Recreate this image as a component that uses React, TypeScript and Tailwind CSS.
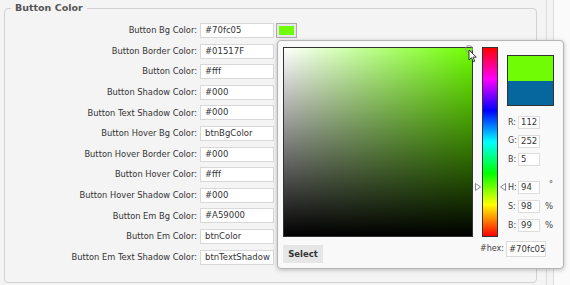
import React from 'react';

const fields: { label: string; value: string }[] = [
    { label: 'Button Bg Color:', value: '#70fc05' },
    { label: 'Button Border Color:', value: '#01517F' },
    { label: 'Button Color:', value: '#fff' },
    { label: 'Button Shadow Color:', value: '#000' },
    { label: 'Button Text Shadow Color:', value: '#000' },
    { label: 'Button Hover Bg Color:', value: 'btnBgColor' },
    { label: 'Button Hover Border Color:', value: '#000' },
    { label: 'Button Hover Color:', value: '#fff' },
    { label: 'Button Hover Shadow Color:', value: '#000' },
    { label: 'Button Em Bg Color:', value: '#A59000' },
    { label: 'Button Em Color:', value: 'btnColor' },
    { label: 'Button Em Text Shadow Color:', value: 'btnTextShadow' },
];

function SmallField({ label, value, unit }: { label: string; value: string; unit?: string }) {
    return (
        <div className="flex items-center h-[13px]">
            <span className="w-[10px] text-[8px] text-[#444]">{label}</span>
            <div className="w-[22px] h-[13px] bg-white border border-[#dcdcdc] px-[2px] text-[8.5px] leading-[11px] text-[#333]">
                {value}
            </div>
            {unit && <span className="ml-[5px] text-[8.5px] text-[#444]">{unit}</span>}
        </div>
    );
}

function Cursor() {
    return (
        <svg width="10" height="14" viewBox="0 0 10 14" className="absolute left-[184px] top-[1px]">
            <path d="M1 1 L1 11 L3.5 8.7 L5.3 12.8 L6.8 12.1 L5 8.2 L8.3 8.2 Z" fill="#fff" stroke="#222" strokeWidth="0.9" strokeLinejoin="round" />
        </svg>
    );
}

function ColorPicker() {
    return (
        <div className="absolute left-[277px] top-[40px] w-[287px] h-[229px] bg-[#f9f9f9] border border-[#b5b5b5] rounded-[4px] shadow-[0_1px_4px_rgba(0,0,0,0.25)] px-[5px] pt-[6px]">
            <div className="flex items-start">
                {/* saturation / brightness square */}
                <div className="relative w-[190px] h-[190px] border border-[#333] bg-[#6eff00]">
                    <div className="absolute inset-0 bg-linear-to-r from-white to-transparent" />
                    <div className="absolute inset-0 bg-linear-to-t from-black to-transparent" />
                    <div className="absolute left-[181px] top-[-3px] w-[8px] h-[8px] rounded-full border border-[#999]" />
                    <Cursor />
                </div>

                {/* hue bar */}
                <div className="relative ml-[9px] w-[16px] h-[190px] border border-[#333] bg-[linear-gradient(to_bottom,#f00,#f0f,#00f,#0ff,#0f0,#ff0,#f00)]">
                    <svg width="6" height="8" viewBox="0 0 6 8" className="absolute left-[-8px] top-[135px]">
                        <path d="M0.5 0.5 L5.5 4 L0.5 7.5 Z" fill="#fff" stroke="#888" />
                    </svg>
                    <svg width="6" height="8" viewBox="0 0 6 8" className="absolute right-[-9px] top-[135px]">
                        <path d="M5.5 0.5 L0.5 4 L5.5 7.5 Z" fill="#fff" stroke="#888" />
                    </svg>
                </div>

                {/* right column */}
                <div className="ml-[9px] mt-[8px] flex flex-col">
                    <div className="w-[47px] h-[51px] border border-[#333] flex flex-col">
                        <div className="flex-1 bg-[#70fc05]" />
                        <div className="flex-1 bg-[#05679e]" />
                    </div>
                    <div className="mt-[10px] flex flex-col gap-[5.5px] pl-[1px]">
                        <SmallField label="R:" value="112" />
                        <SmallField label="G:" value="252" />
                        <SmallField label="B:" value="5" />
                    </div>
                    <div className="mt-[15px] flex flex-col gap-[6px] pl-[1px]">
                        <div className="relative">
                            <SmallField label="H:" value="94" />
                            <span className="absolute left-[41px] top-[-2px] text-[8px] text-[#444]">°</span>
                        </div>
                        <SmallField label="S:" value="98" unit="%" />
                        <SmallField label="B:" value="99" unit="%" />
                    </div>
                </div>
            </div>

            <div className="flex items-start justify-between mt-[4px] pr-[12px]">
                <button className="mt-[4px] w-[40px] h-[18px] bg-[#e6e6e6] text-[8.5px] font-bold text-[#333]">
                    Select
                </button>
                <div className="flex items-center">
                    <span className="text-[8px] text-[#444] mr-[2px]">#hex:</span>
                    <div className="w-[40px] h-[16px] bg-white border border-[#dcdcdc] px-[2px] text-[8.5px] leading-[14px] text-[#333]">
                        #70fc05
                    </div>
                </div>
            </div>
        </div>
    );
}

export default function App() {
    return (
        <div className="relative flex w-[570px] h-[285px] overflow-hidden bg-[#f4f4f4] font-['DejaVu_Sans',sans-serif]">
            <fieldset className="ml-[4px] mt-[2px] w-[533px] h-[281px] border border-[#d2d2d2] rounded-[4px]">
                <legend className="ml-[6px] px-[4px] text-[9.5px] leading-[12px] font-bold text-[#555]">
                    Button Color
                </legend>

                <div className="mt-[9px] flex flex-col gap-[5.6px]">
                    {fields.map((f, i) => (
                        <div key={f.label} className="flex items-center">
                            <span className="w-[192px] text-right text-[8.3px] text-[#333] whitespace-nowrap">
                                {f.label}
                            </span>
                            <div className="ml-[3px] w-[74px] h-[15px] bg-white border border-[#d8d8d8] px-[4px] text-[8.5px] leading-[13px] text-[#333] whitespace-nowrap overflow-hidden">
                                {f.value}
                            </div>
                            {i === 0 && (
                                <div className="ml-[2px] w-[21px] h-[15px] border border-[#aaa] bg-[#e8e8e8] p-[2px]">
                                    <div className="w-full h-full bg-[#70fc05]" />
                                </div>
                            )}
                        </div>
                    ))}
                </div>
            </fieldset>

            <div className="ml-[9px] w-[8px] h-full border-x border-[#dcdcdc]" />
            <div className="flex-1 h-full bg-[#fafafa]" />

            <ColorPicker />
        </div>
    );
}
